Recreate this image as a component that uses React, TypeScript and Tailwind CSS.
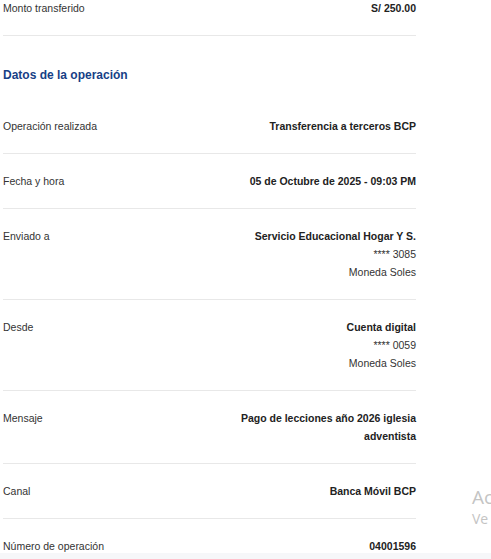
import React from "react";

type Row = { label: string; value: string; sub?: string[] };

const rows: Row[] = [
  { label: "Operación realizada", value: "Transferencia a terceros BCP" },
  { label: "Fecha y hora", value: "05 de Octubre de 2025 - 09:03 PM" },
  { label: "Enviado a", value: "Servicio Educacional Hogar Y S.", sub: ["**** 3085", "Moneda Soles"] },
  { label: "Desde", value: "Cuenta digital", sub: ["**** 0059", "Moneda Soles"] },
  { label: "Mensaje", value: "Pago de lecciones año 2026 iglesia adventista" },
  { label: "Canal", value: "Banca Móvil BCP" },
  { label: "Número de operación", value: "04001596" },
];

function DataRow({ row, last }: { row: Row; last?: boolean }) {
  return (
    <div
      className={
        "flex justify-between py-[18px] " + (last ? "" : "border-b border-[#e8e8e8]")
      }
    >
      <div className="text-[#333333]">{row.label}</div>
      <div className="flex flex-col items-end text-right max-w-[200px]">
        <div className="font-bold text-[#222222]">{row.value}</div>
        {row.sub?.map((s) => (
          <div key={s} className="text-[#333333]">
            {s}
          </div>
        ))}
      </div>
    </div>
  );
}

export default function App() {
  return (
    <div
      className="relative w-[491px] h-[559px] overflow-hidden bg-white text-[10.5px] leading-[18px]"
      style={{ fontFamily: '"Liberation Sans", Arial, sans-serif' }}
    >
      <div className="ml-[3px] w-[413px] -mt-[1px]">
        <div className="flex justify-between pb-[18px] border-b border-[#e8e8e8]">
          <div className="text-[#333333]">Monto transferido</div>
          <div className="font-bold text-[#222222]">S/ 250.00</div>
        </div>
        <div className="mt-[29px] mb-[14px] text-[12px] leading-[20px] font-bold text-[#173f86]">
          Datos de la operación
        </div>
        {rows.map((r, i) => (
          <DataRow key={r.label} row={r} last={i === rows.length - 1} />
        ))}
      </div>
      <div className="absolute left-0 right-0 bottom-0 h-[6px] bg-[#f6f7f9]" />
      <div
        className="absolute left-[472px] top-[484px] whitespace-nowrap text-[#c4c4c4]"
        style={{ fontFamily: '"Open Sans", "Noto Sans", sans-serif' }}
      >
        <div className="text-[19px] leading-[26px]">Ac</div>
        <div className="text-[14px] leading-[18px]">Ve</div>
      </div>
    </div>
  );
}
